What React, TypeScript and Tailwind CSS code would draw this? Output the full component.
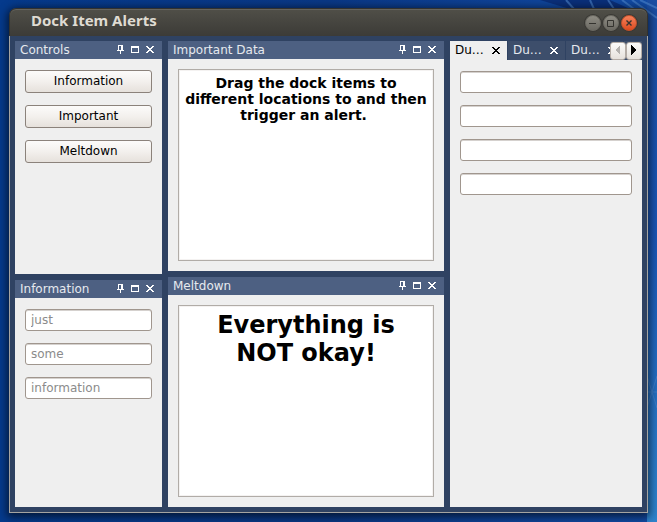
import React from "react";

function PinIcon() {
  return (
    <svg width="7" height="10" viewBox="0 0 7 10" fill="currentColor" shapeRendering="crispEdges" aria-hidden="true">
      <path d="M1 0h5v5h1v1H4v3H3V6H0V5h1zM2 1v4h2V1z" fillRule="evenodd" />
    </svg>
  );
}

function MaximizeIcon() {
  return (
    <svg width="8" height="8" viewBox="0 0 8 8" fill="currentColor" shapeRendering="crispEdges" aria-hidden="true">
      <path d="M0 0h8v7H0zM1 2v4h6V2z" fillRule="evenodd" />
    </svg>
  );
}

function CloseIcon() {
  return (
    <svg width="8" height="8" viewBox="0 0 8 8" fill="currentColor" shapeRendering="crispEdges" aria-hidden="true">
      <path d="M0 0h2v1h1v1h2V1h1V0h2v1H7v1H6v1H5v1h1v1h1v1h1v1H6V6H5V5H3v1H2v1H0V6h1V5h1V4h1V3H2V2H1V1H0z" />
    </svg>
  );
}

function TitleBar({ title }: { title: string }) {
  return (
    <header className="flex h-[18px] shrink-0 items-center bg-[#4d6082] pl-[5px] pr-2 text-[12px] leading-[18px] text-[#e6e9ee]">
      <h2 className="min-w-0 flex-1 truncate">{title}</h2>
      <div className="flex items-center gap-[7px] text-white">
        <button type="button" aria-label={`Pin ${title}`}><PinIcon /></button>
        <button type="button" aria-label={`Maximize ${title}`}><MaximizeIcon /></button>
        <button type="button" aria-label={`Close ${title}`}><CloseIcon /></button>
      </div>
    </header>
  );
}

function DockItem({ title, size, children }: { title: string; size: string; children: React.ReactNode }) {
  return (
    <section className={`flex min-h-0 flex-col bg-[#efefef] ${size}`}>
      <TitleBar title={title} />
      {children}
    </section>
  );
}

function PushButton({ children }: { children: React.ReactNode }) {
  return (
    <button
      type="button"
      className="h-[23px] w-full rounded-[3px] border border-[#8b827b] bg-linear-to-b from-[#fcfbfa] via-[#f3f0ed] to-[#e6e1dc] pb-px text-[12px] leading-5 text-black"
    >
      {children}
    </button>
  );
}

function Field({ label, placeholder }: { label: string; placeholder?: string }) {
  return (
    <input
      type="text"
      aria-label={label}
      placeholder={placeholder}
      className="h-[22px] w-full rounded-[3px] border border-[#a0968e] bg-white px-[5px] text-[12px] text-black shadow-[inset_0_1px_0_#d5d1ce] placeholder:text-[#8b8b8b]"
    />
  );
}

function TextBox({ label, text, type }: { label: string; text: string; type: string }) {
  return (
    <div className="flex min-h-0 flex-1 p-[10px]">
      <textarea
        aria-label={label}
        defaultValue={text}
        className={`w-full resize-none overflow-hidden border border-[#b1aca7] bg-white px-1 py-[5px] text-center font-bold text-black shadow-[inset_0_0_0_1px_#f4f2f1] ${type}`}
      />
    </div>
  );
}

function Tab({ active }: { active?: boolean }) {
  return (
    <div
      className={`flex h-[19px] w-[57px] shrink-0 items-center justify-between pl-[5px] pr-[7px] pt-px text-[12px] leading-4 ${
        active ? "bg-[#efefef] text-black" : "bg-[#3d4e6b] text-[#e6e9ee]"
      }`}
    >
      <button type="button" role="tab" aria-selected={!!active} className="self-start">Du…</button>
      <button type="button" aria-label="Close tab" className={active ? "text-black" : "text-white"}>
        <CloseIcon />
      </button>
    </div>
  );
}

function ScrollButton({ label, direction }: { label: string; direction: "left" | "right" }) {
  return (
    <button
      type="button"
      aria-label={label}
      className="flex h-[18px] w-4 items-center justify-center rounded-[3px] border border-[#b4aca6] bg-linear-to-b from-[#fcfbfa] to-[#e6e1dc] pb-[2px]"
    >
      <svg width="6" height="10" viewBox="0 0 6 10" shapeRendering="crispEdges" aria-hidden="true">
        {direction === "left" ? <path d="M5 0v10L0 5z" fill="#b5b2af" /> : <path d="M0 0v10l6-5z" fill="#000" />}
      </svg>
    </button>
  );
}

function WindowButton({ label, kind }: { label: string; kind: "min" | "max" | "close" }) {
  const tone =
    kind === "close"
      ? "border-[#c2502b] from-[#f58059] to-[#dd4a1d]"
      : "border-[#6b6962] from-[#8e8c84] to-[#6b6962]";
  return (
    <button
      type="button"
      aria-label={label}
      className={`flex size-4 items-center justify-center rounded-full border bg-linear-to-b shadow-[0_0_0_1px_#3a3935] ${tone}`}
    >
      <svg width="8" height="8" viewBox="0 0 8 8" fill="none" stroke="#34332f" aria-hidden="true">
        {kind === "min" && <path d="M0 4.5h7" />}
        {kind === "max" && <path d="M.5 1.5h6v6h-6z" />}
        {kind === "close" && <path d="M1.5 1.5l5 5m0-5l-5 5" strokeWidth="1.4" />}
      </svg>
    </button>
  );
}

function Wallpaper() {
  return (
    <svg
      className="absolute inset-0 size-full"
      viewBox="0 0 657 522"
      preserveAspectRatio="none"
      aria-hidden="true"
    >
      <defs>
        <linearGradient id="side" x1="0" x2="1">
          <stop offset="0" stopColor="#053a8c" />
          <stop offset=".5" stopColor="#0a3885" />
          <stop offset="1" stopColor="#124ba5" />
        </linearGradient>
        <linearGradient id="right" x1="0" y1="0" x2="0" y2="1">
          <stop offset="0" stopColor="#1b4da1" />
          <stop offset=".45" stopColor="#1a55b5" />
          <stop offset="1" stopColor="#2e84cd" />
        </linearGradient>
      </defs>
      <path d="M0 0h657v522H0z" fill="url(#side)" />
      <path d="M647 0h10v522h-10z" fill="url(#right)" />
      <path d="M540 0h70l20 9h-60z" fill="#0a2f7a" />
      <g stroke="#4d86cc" strokeWidth="2" opacity=".6">
        <path d="M566 0l8 9M590 0l4 9M608 0l6 9M622 0l12 9M632 0l25 18M640 0l17 8" />
        <path d="M647 376l10 32M647 408l10-32M647 392h10" strokeWidth="1" />
      </g>
    </svg>
  );
}

export default function App() {
  return (
    <div className="relative flex min-h-screen bg-[#083a8c] px-[9px] pb-[9px] pt-2 font-['DejaVu_Sans',sans-serif]">
      <Wallpaper />
      <main className="relative flex min-w-0 flex-1 flex-col overflow-hidden rounded-t-[7px] bg-[#2f4262] shadow-[0_2px_8px_2px_rgba(0,0,0,0.6)]">
        <header className="flex h-7 shrink-0 items-center rounded-t-[7px] border border-b-0 border-[#33322e] bg-linear-to-b from-[#504f48] to-[#3c3b37] pl-[21px] pr-[10px] shadow-[inset_0_1px_0_#66645d]">
          <h1 className="min-w-0 flex-1 self-start truncate font-['Noto_Sans',sans-serif] text-[15px] font-bold leading-[22px] text-[#dfdbd2]">
            Dock Item Alerts
          </h1>
          <div className="flex gap-[2px]">
            <WindowButton label="Minimize" kind="min" />
            <WindowButton label="Maximize" kind="max" />
            <WindowButton label="Close" kind="close" />
          </div>
        </header>

        <div className="grid flex-1 grid-cols-[147fr_276fr_192fr] gap-[6px] border border-t-0 border-[#a5a4a1] p-[5px]">
          <div className="flex min-w-0 flex-col gap-[6px]">
            <DockItem title="Controls" size="flex-[233_1_0px]">
              <div className="flex flex-col gap-3 px-[10px] py-[11px]">
                <PushButton>Information</PushButton>
                <PushButton>Important</PushButton>
                <PushButton>Meltdown</PushButton>
              </div>
            </DockItem>
            <DockItem title="Information" size="flex-[227_1_0px]">
              <div className="flex flex-col gap-3 px-[10px] py-[11px]">
                <Field label="First value" placeholder="just" />
                <Field label="Second value" placeholder="some" />
                <Field label="Third value" placeholder="information" />
              </div>
            </DockItem>
          </div>

          <div className="flex min-w-0 flex-col gap-[6px]">
            <DockItem title="Important Data" size="flex-[1_1_0px]">
              <TextBox
                label="Important Data"
                text="Drag the dock items to different locations to and then trigger an alert. "
                type="text-[14px] leading-4"
              />
            </DockItem>
            <DockItem title="Meltdown" size="flex-[1_1_0px]">
              <TextBox label="Meltdown" text={"Everything is\nNOT okay!"} type="text-[24px] leading-7" />
            </DockItem>
          </div>

          <section className="flex min-w-0 flex-col bg-[#efefef]">
            <div className="relative flex h-[19px] shrink-0 bg-[#2f4262]">
              <div role="tablist" className="flex min-w-0 flex-1 gap-px overflow-hidden">
                <Tab active />
                <Tab />
                <Tab />
                <div className="flex-1 bg-[#3d4e6b]" />
              </div>
              <div className="absolute bottom-0 right-0 flex">
                <ScrollButton label="Previous tabs" direction="left" />
                <ScrollButton label="Next tabs" direction="right" />
              </div>
            </div>
            <div className="flex flex-col gap-3 px-[10px] py-[11px]">
              <Field label="Field 1" />
              <Field label="Field 2" />
              <Field label="Field 3" />
              <Field label="Field 4" />
            </div>
          </section>
        </div>
      </main>
    </div>
  );
}
